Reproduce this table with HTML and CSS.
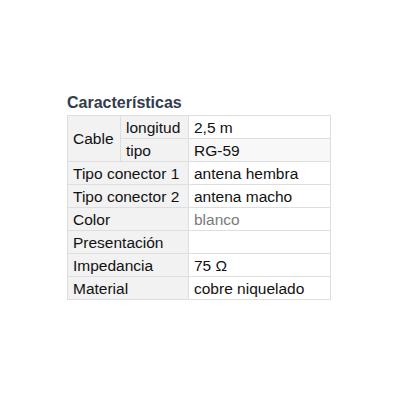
FILE: index.html
```html
<!DOCTYPE html>
<html>
<head>
<meta charset="utf-8">
<link rel="stylesheet" href="styles.css">
</head>
<body>
<div class="wrap">
  <h3 class="title">Características</h3>
  <table class="specs">
    <tr><td class="k c1" rowspan="2">Cable</td><td class="k c2">longitud</td><td class="v">2,5 m</td></tr>
    <tr class="alt"><td class="k c2">tipo</td><td class="v">RG-59</td></tr>
    <tr><td class="k" colspan="2">Tipo conector 1</td><td class="v">antena hembra</td></tr>
    <tr><td class="k" colspan="2">Tipo conector 2</td><td class="v">antena macho</td></tr>
    <tr><td class="k" colspan="2">Color</td><td class="v muted">blanco</td></tr>
    <tr><td class="k" colspan="2">Presentación</td><td class="v"></td></tr>
    <tr><td class="k" colspan="2">Impedancia</td><td class="v">75 Ω</td></tr>
    <tr><td class="k" colspan="2">Material</td><td class="v">cobre niquelado</td></tr>
  </table>
</div>
</body>
</html>
```
FILE: styles.css
```css
html, body { margin: 0; padding: 0; background: #fff; }
body { font-family: "Liberation Sans", Arial, sans-serif; }
.wrap { padding: 93px 0 0 67px; }
.title {
  margin: 0 0 3px 0;
  font-size: 16px;
  line-height: 19px;
  font-weight: bold;
  color: #323c4e;
}
.specs {
  border-collapse: collapse;
  font-size: 15.5px;
  color: #111;
  table-layout: fixed;
  width: 264px;
}
.specs td {
  border: 1px solid #dedede;
  height: 22px;
  padding: 0 5px;
  line-height: 17px;
  white-space: nowrap;
}
.specs td.c1 { width: 42px; }
.specs td.c2 { width: 57px; }
.specs td.k { background: #f2f2f2; }
.specs td.v { width: 131px; background: #fff; }
.specs tr.alt td.v { background: #f8f8f8; }
.specs td.muted { color: #7a7a7a; }
```
